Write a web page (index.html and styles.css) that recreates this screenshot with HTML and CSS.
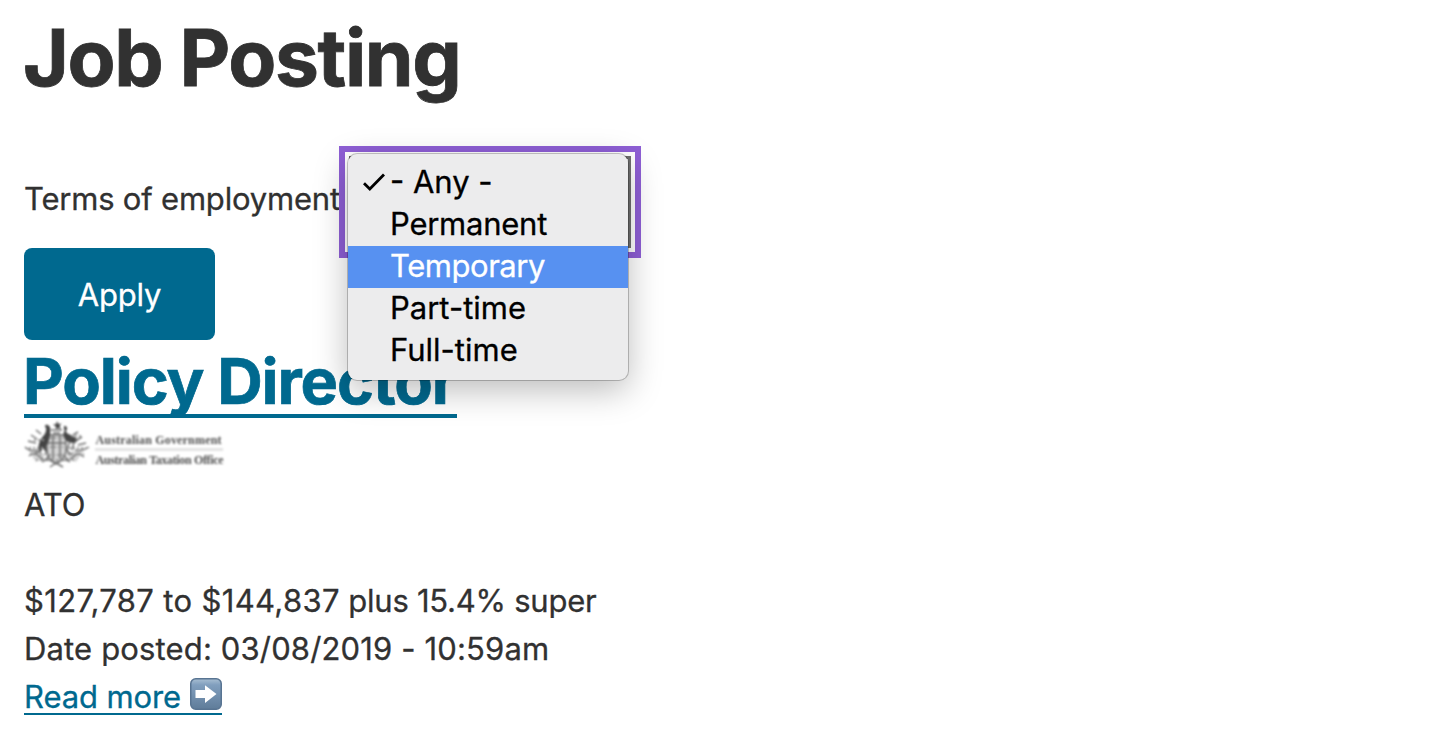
FILE: index.html
```html
<!DOCTYPE html>
<html lang="en">
<head>
<meta charset="utf-8">
<title>Job Posting</title>
<link rel="stylesheet" href="styles.css">
</head>
<body>
<main class="page">
  <h1 class="title">Job Posting</h1>
  <form class="filter">
    <div class="field">
      <label class="label">Terms of employment</label>
      <div class="select">
        <ul class="menu">
          <li class="option"><svg class="check" viewBox="0 0 24 20"><path d="M2 11.2 7.8 17 22 2.5"/></svg><span class="o-any">- Any -</span></li>
          <li class="option"><span class="o-perm">Permanent</span></li>
          <li class="option active"><span class="o-temp">Temporary</span></li>
          <li class="option"><span class="o-part">Part-time</span></li>
          <li class="option"><span class="o-full">Full-time</span></li>
        </ul>
      </div>
    </div>
    <button class="apply" type="button">Apply</button>
  </form>
  <article class="job">
    <h2 class="heading"><a class="heading-link" href="#">Policy Director</a></h2>
    <svg class="logo" viewBox="0 0 200 48">
      <g class="crest">
        <path class="pale" d="M22 14h20v20q-2 8-10 10-8-2-10-10zM2 27q6 5 14 4l5 6-9 5M62 27q-6 5-14 4l-5 6 9 5"/>
        <path class="ink" d="m33 1 1.500 3 3-.5-2 2.500 1.500 3-3-1-2 1.500-.2-3-2.800-2 3.200-.5z"/>
        <path class="line" d="M27 10h11M29 13h7M23 15h19v17q-2 8-10 11-8-3-9-11zM23 23h19M29 15v24M36 15v24"/>
        <path class="ink" d="M24 5c-3-1-4 1-2 3 1 6-4 8-6 13-2 4-2 8 0 12l3-5 4 6-1-8c4-5 5-14 4-19zM40 6c3 0 4 2 2 5 0 4 7 3 12 9l-3 3c-5 0-9-1-11-6-2-4 2-6 0-8z"/>
        <path class="line" d="M46 21l-3 9 4 5M50 22l-2 8M16 31l-6 3M12 10l5 4M7 15l6 4M4 21l8 2M1 27q5 5 13 3M5 36q5-5 11 1t8-1M54 12l-5 3M58 17l-7 4M62 23l-8 2M65 27q-7 5-14 3M60 37q-6-6-11 0t-8-1M18 42q6-5 14 2 8-7 14-2M26 47l6-4 7 4"/>
        <path class="dots" d="M10 20h10M5 28h16M8 34h15M12 40h40M45 28h17M43 34h17M47 16h10M26 18h13M26 27h13M25 35h14"/>
      </g>
      <path class="rule" d="M71 29.500h128"/>
      <text class="logo-text" x="71.500" y="23.500" textLength="126">Australian Government</text>
      <text class="logo-text" x="71.500" y="44" textLength="128">Australian Taxation Office</text>
    </svg>
    <p class="line-text agency">ATO</p>
    <p class="line-text"><span class="salary"><span class="amount">$127,787 to $144,837</span> plus 15.4% super</span></p>
    <p class="line-text"><span class="posted">Date posted: 03/08/2019 - 10:59am</span></p>
    <p class="line-text"><a class="more" href="#"><span class="more-text">Read more</span><svg class="arrow" viewBox="0 0 32 32"><defs><linearGradient id="tile" x2="0" y2="1"><stop offset="0" stop-color="#a9bfd3"/><stop offset=".2" stop-color="#819fbe"/><stop offset="1" stop-color="#5f7c99"/></linearGradient></defs><rect x=".75" y=".75" width="30.500" height="30.500" rx="5" fill="url(#tile)" stroke="#587492" stroke-width="1.500"/><path fill="#fff" d="M5.500 12h9.500V7.200L26.500 16 15 25v-5H5.500z"/></svg></a></p>
  </article>
</main>
</body>
</html>
```
FILE: styles.css
```css
* { box-sizing: border-box; }
html, body { height: 100%; }
body {
  margin: 0;
  background: #fff;
  color: #313131;
  font: 31px/48px Inter, "Liberation Sans", sans-serif;
  -webkit-text-stroke: .3px currentColor;
  overflow: hidden;
}
.page { display: flex; flex-direction: column; padding: 0 24px; }
.title {
  margin: 0;
  height: 156px;
  padding-top: 10px;
  font-size: 78.500px;
  line-height: 96px;
  font-weight: 700;
  letter-spacing: -1.400px;
  text-indent: -1px;
  -webkit-text-stroke: .8px currentColor;
}
.filter { display: flex; flex-direction: column; align-items: flex-start; }
.field { display: flex; height: 92px; }
.label { width: 325px; padding-top: 19px; letter-spacing: -0.2px; white-space: nowrap; }
.select {
  position: relative;
  width: 282px;
  height: 92px;
  border: 3px solid #6f6f6f;
  box-shadow: 0 0 0 4px #fff, 0 0 0 10px #8e5fd5;
}
.menu {
  position: absolute;
  left: -4px;
  top: -5px;
  width: 280px;
  height: 226px;
  margin: 0;
  padding: 8px 0;
  list-style: none;
  color: #000;
  background: #ececed;
  border-radius: 9px;
  box-shadow: 0 0 0 1px rgba(0, 0, 0, .22), 0 10px 34px rgba(0, 0, 0, .27);
}
.option { position: relative; height: 42px; padding-left: 42px; line-height: 40px; white-space: nowrap; }
.active { color: #fff; background: #5791f1; }
.o-perm { letter-spacing: -.25px; }
.o-temp { letter-spacing: -.45px; }
.check { position: absolute; left: 14px; top: 10px; width: 24px; height: 20px; fill: none; stroke: #000; stroke-width: 2.800; }
.apply {
  width: 191px;
  height: 92px;
  padding: 2px 0 0;
  border: 0;
  border-radius: 8px;
  color: #fff;
  background: #00698f;
  font: inherit;
  letter-spacing: -.2px;
  -webkit-text-stroke: .3px #fff;
}
.job { display: flex; flex-direction: column; align-items: flex-start; }
.heading { margin: 0; height: 80px; font-size: 63px; line-height: 76px; letter-spacing: -1.100px; -webkit-text-stroke: .7px currentColor; }
.heading-link {
  display: block;
  width: 433px;
  height: 78px;
  padding-top: 3px;
  border-bottom: 4px solid #00698f;
  color: #00698f;
  text-decoration: none;
  text-indent: -1px;
  white-space: nowrap;
  -webkit-text-stroke-color: #00698f;
}
.logo { width: 200px; height: 48px; filter: blur(.9px); }
.pale { fill: #d4d4d4; }
.ink { fill: #444; }
.line { fill: none; stroke: #707070; stroke-width: 1.500; }
.dots { fill: none; stroke: #999; stroke-width: 2; stroke-dasharray: 2 2; }
.rule { stroke: #dedede; stroke-width: 2.500; }
.logo-text { font: bold 12px "Liberation Serif", serif; fill: #505050; -webkit-text-stroke: 0; }
.line-text { margin: 0; height: 48px; white-space: nowrap; }
.agency { height: 96px; margin-top: 13px; }
.salary { letter-spacing: -.25px; }
.amount { letter-spacing: .35px; }
.posted { letter-spacing: .15px; }
.more { display: flex; width: 198px; height: 42px; border-bottom: 2px solid #00698f; color: #00698f; text-decoration: none; letter-spacing: -.1px; -webkit-text-stroke-color: #00698f; }
.more-text { width: 166px; }
.arrow { width: 32px; height: 32px; margin-top: 5px; }
```
